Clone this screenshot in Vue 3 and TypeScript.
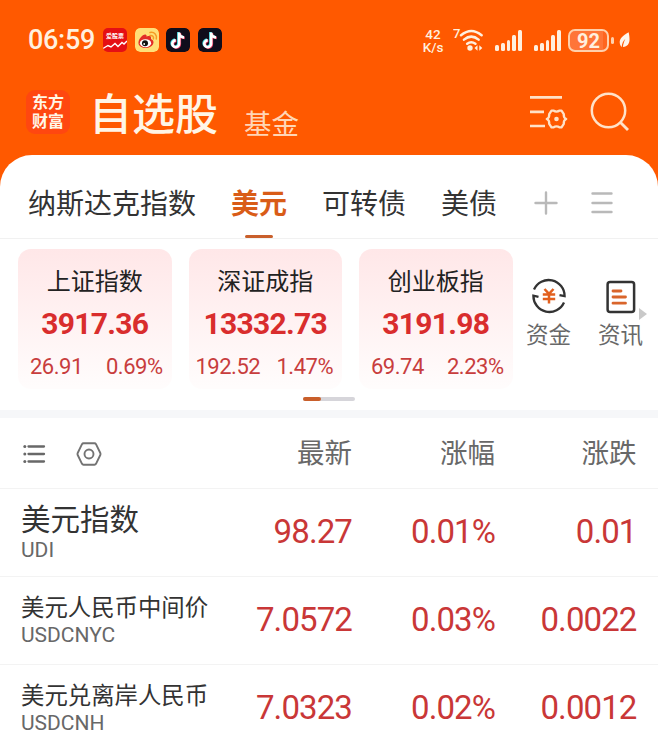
<script setup lang="ts">
interface IndexCard { name: string; value: string; change: string; percent: string }
interface Quote { name: string; code: string; last: string; percent: string; change: string; large?: boolean }

const tabs: string[] = ['纳斯达克指数', '美元', '可转债', '美债']
const activeTab = '美元'
const cards: IndexCard[] = [
  { name: '上证指数', value: '3917.36', change: '26.91', percent: '0.69%' },
  { name: '深证成指', value: '13332.73', change: '192.52', percent: '1.47%' },
  { name: '创业板指', value: '3191.98', change: '69.74', percent: '2.23%' },
]
const quotes: Quote[] = [
  { name: '美元指数', code: 'UDI', last: '98.27', percent: '0.01%', change: '0.01', large: true },
  { name: '美元人民币中间价', code: 'USDCNYC', last: '7.0572', percent: '0.03%', change: '0.0022' },
  { name: '美元兑离岸人民币', code: 'USDCNH', last: '7.0323', percent: '0.02%', change: '0.0012' },
]
const signalBars = [6, 8, 11, 16, 21]
</script>

<template>
  <main class="screen">
    <div class="status">
      <span class="time">06:59</span>
      <div class="apps">
        <span class="app stock">
          <b>爱股票</b>
          <svg viewBox="0 0 24 11"><path d="M0 9.5 5 6.5l3 1.5 4-3.5 3 3 4-4 2 1.500 3-3" fill="none" stroke="#fff" stroke-width="1.4" /></svg>
        </span>
        <svg class="app" viewBox="0 0 24 24">
          <rect width="24" height="24" rx="5" fill="#ffdf78" />
          <path d="M3.500 15.500C3 11 8 6 10.500 6.500c1.500.3 1 2 1 2s4.500-1.800 4.500 1c0 1.200-.3 1.500.8 2C21 14 17 20 11 20c-4 0-7.200-2-7.500-4.500z" fill="#e22d27" />
          <ellipse cx="10.500" cy="15.200" rx="5.600" ry="4" fill="#fff" />
          <circle cx="10" cy="15.300" r="3" fill="#111" /><circle cx="9.200" cy="16" r=".9" fill="#fff" />
          <path d="M15 7.500c2.500-.5 4 1.200 3.400 3.400M15 4.500c4.500-.8 7.300 2.400 6.300 6.400" fill="none" stroke="#f59b24" stroke-width="1.500" stroke-linecap="round" />
        </svg>
        <svg v-for="n in 2" :key="n" class="app" viewBox="0 0 24 24">
          <rect width="24" height="24" rx="5" fill="#100d1b" />
          <g fill="none" stroke-width="2.600">
            <path d="M12.400 4v11.300a3.400 3.400 0 1 1-3.400-3.400M12.400 4.500c.4 2.700 2.200 4.300 5 4.500" stroke="#35dbe4" />
            <path d="M13.800 5v11.300a3.400 3.400 0 1 1-3.400-3.400M13.800 5.500c.4 2.700 2.200 4.300 5 4.500" stroke="#f2416b" />
            <path d="M13.100 4.500v11.300a3.400 3.400 0 1 1-3.400-3.400M13.100 5c.4 2.700 2.200 4.300 5 4.500" stroke="#fff" />
          </g>
        </svg>
      </div>
      <div class="speed"><span>42</span><span>K/s</span></div>
      <svg class="wifi" viewBox="0 0 31 26">
        <text x="0" y="11" font-size="13" font-weight="500" fill="#fff0df">7</text>
        <g fill="none" stroke="#fff0df" stroke-width="2.500" stroke-linecap="round">
          <path d="M8 8.200q10.300-8.400 20.600 0M11 12.600q7.300-6 14.600 0M14.200 16.700q4-3 8.200 0" />
        </g>
        <circle cx="17" cy="21" r="2.700" fill="#fff0df" />
        <path d="M21.500 21l3-2.800v5.600zM29.300 21l-3-2.800v5.600z" fill="#fff0df" />
      </svg>
      <div v-for="s in 2" :key="s" class="signal">
        <i v-for="h in signalBars" :key="h" :style="{ height: h + 'px' }"></i>
      </div>
      <div class="battery">92</div>
      <i class="nub"></i>
      <svg class="leaf" viewBox="0 0 12 18"><path d="M10.500.5C4 4 .5 7.500.8 12c.1 2 1.100 3.700 2.200 4.700 0-3.500 1.600-6.400 4-9-1.500 3-2.500 6-2.700 9 5-.2 7.200-4 7.200-8.200 0-3-.4-5.500-1-8z" fill="#fff6ea" /></svg>
    </div>

    <header class="header">
      <div class="logo"><span>东方</span><span>财富</span></div>
      <h1>自选股</h1>
      <span class="fund">基金</span>
      <svg class="filter" viewBox="0 0 40 36" fill="none" stroke="#ffe2c8" stroke-width="2.700">
        <path d="M1 3.400h32M1 17.800h14M1 32h15" />
        <path d="M22.500 16.600h1.800q3.200 2 6.400 0h1.800l2.300 3.600q-.4 3.600 2.400 4.800-2.800 1.200-2.400 4.800l-2.300 3.600h-1.800q-3.200-2-6.400 0h-1.800l-2.300-3.600q.4-3.600-2.400-4.800 2.800-1.200 2.400-4.800z" stroke-width="2.300" stroke-linejoin="round" />
        <circle cx="27.500" cy="25" r="2.300" fill="#ffe2c8" stroke="none" />
      </svg>
      <svg class="search" viewBox="0 0 40 40" fill="none" stroke="#ffe2c8" stroke-width="2.500">
        <circle cx="18.500" cy="18.500" r="16.700" /><path d="m30.500 30.500 7.500 7.500" stroke-width="2.900" />
      </svg>
    </header>

    <section class="panel">
      <nav class="tabs">
        <span v-for="tab in tabs" :key="tab" :class="{ active: tab === activeTab }">{{ tab }}</span>
        <svg class="plus" viewBox="0 0 24 24"><path d="M12 1.500v21M1.500 12h21" /></svg>
        <svg class="menu" viewBox="0 0 24 24"><path d="M2.500 2.500h19M2.500 12h19M2.500 21h19" /></svg>
      </nav>

      <div class="indices">
        <article v-for="card in cards" :key="card.name" class="card">
          <h2>{{ card.name }}</h2>
          <strong>{{ card.value }}</strong>
          <div class="delta"><span>{{ card.change }}</span><span>{{ card.percent }}</span></div>
        </article>
        <div class="shortcut money">
          <svg viewBox="0 0 36 36" fill="none">
            <path d="M3 11.500A16 16 0 0 1 33.600 18.200L28.500 17.200M33 24.500A16 16 0 0 1 2.400 17.600L7.500 18.800" stroke="#333" stroke-width="2.300" />
            <path d="m13.500 11 4.500 4.800 4.500-4.800M11.800 16.500h12.400M11.800 21h12.400M18 16v9.500" stroke="#e2601e" stroke-width="2.500" />
          </svg>
          <span>资金</span>
        </div>
        <div class="shortcut news">
          <svg viewBox="0 0 36 36" fill="none">
            <rect x="4.600" y="4" width="26.500" height="30" rx="2.500" stroke="#333" stroke-width="2.500" />
            <path d="M10 13h8M10 19h12.500M10 25.200h12.500" stroke="#d9652b" stroke-width="2.800" stroke-linecap="round" />
          </svg>
          <span>资讯</span>
        </div>
        <i class="arrow"></i>
      </div>
      <div class="pager"><i></i></div>
      <div class="divider"></div>

      <div class="grid head">
        <div class="tools">
          <svg class="list" viewBox="0 0 24 22"><path d="M6.500 3.500h15.500M6.500 11h15.500M6.500 18.500h15.500" stroke="#686868" stroke-width="2.300" stroke-linecap="round" /><g fill="#686868"><circle cx="2.800" cy="3.500" r="1.500" /><circle cx="2.800" cy="11" r="1.500" /><circle cx="2.800" cy="18.500" r="1.500" /></g></svg>
          <svg class="hex" viewBox="0 0 26 24" fill="none" stroke="#737373" stroke-width="1.900"><path d="M7.500 1.300h11q1 0 1.500.9l4.300 8.800q.5 1 0 2L20 21.800q-.5.9-1.500.9h-11q-1 0-1.500-.9L1.700 13q-.5-1 0-2L6 2.200q.5-.9 1.500-.9z" /><circle cx="13" cy="12" r="4.500" /></svg>
        </div>
        <span>最新</span><span>涨幅</span><span>涨跌</span>
      </div>
      <div v-for="q in quotes" :key="q.code" class="grid row">
        <div class="name" :class="{ large: q.large }"><b>{{ q.name }}</b><small>{{ q.code }}</small></div>
        <span>{{ q.last }}</span><span>{{ q.percent }}</span><span>{{ q.change }}</span>
      </div>
    </section>
  </main>
</template>

<style>
body { overflow: hidden; }
</style>

<style scoped>
* { box-sizing: border-box; }
svg { display: block; flex: none; }
.screen { width: 658px; height: 750px; overflow: hidden; background: #ff5900; color: #333; font-family: Roboto, "Noto Sans CJK SC", sans-serif; white-space: nowrap; }
.status { height: 80px; padding-left: 28px; display: flex; align-items: center; color: #fff0df; }
.time { width: 75px; font-size: 27px; font-weight: 500; letter-spacing: -.3px; line-height: 30px; }
.apps { display: flex; gap: 7.500px; width: 319px; }
.app { width: 24px; height: 24px; border-radius: 5px; }
.stock { background: #e50f14; color: #fff; overflow: hidden; display: flex; flex-direction: column; align-items: center; padding-top: 4px; }
.stock b { font-size: 6px; line-height: 7px; }
.stock svg { width: 24px; height: 11px; }
.speed { width: 22px; display: flex; flex-direction: column; align-items: center; gap: 1px; font-size: 13.500px; line-height: 12px; font-weight: 500; }
.speed span { height: 12px; }
.wifi { width: 31px; height: 26px; margin-left: 9px; }
.signal { display: flex; align-items: flex-end; justify-content: space-between; width: 27px; height: 22px; margin-left: 11px; }
.signal + .signal { margin-left: 12px; }
.signal i { width: 3.800px; background: #fff0df; border-radius: 1.500px; }
.battery { width: 41px; height: 23px; margin-left: 7px; border: 2px solid #ffd0ac; border-radius: 7px; background: linear-gradient(90deg, #ff7538 88%, #ff6520 88%); text-align: center; font-size: 20px; line-height: 20px; font-weight: 700; }
.nub { width: 2.500px; height: 7px; border-radius: 2px; background: #ffd0ac; margin: 0 5px 0 2px; }
.leaf { width: 11px; height: 18px; }
.header { height: 75px; display: flex; align-items: flex-start; padding-left: 26px; }
.logo { width: 44px; height: 44px; margin-top: 10px; border-radius: 9px; background: #ff4710; color: #fff7e8; display: flex; flex-direction: column; align-items: center; gap: 2px; padding-top: 4px; font: 700 16px/17px Roboto, "Noto Sans CJK SC", sans-serif; }
h1 { margin: 9px 0 0 19px; width: 155px; font-size: 43px; line-height: 52px; font-weight: 500; color: #fff5e7; }
.fund { width: 285px; margin-top: 27px; font-size: 27.500px; line-height: 36px; color: #ffd6b6; }
.filter { width: 40px; height: 36px; margin-top: 14px; }
.search { width: 40px; height: 40px; margin: 12px 0 0 21px; }
.panel { height: 595px; background: #fff; border-radius: 32px 32px 0 0; }
.tabs { height: 84px; padding: 1px 0 0 28px; display: flex; align-items: flex-start; border-bottom: 1px solid #f1f1f1; }
.tabs span { height: 82px; font-size: 28px; line-height: 97px; margin-right: 35px; display: flex; flex-direction: column; align-items: center; }
.tabs .active { font-weight: 700; color: #d95c17; }
.tabs .active::after { content: ""; width: 28px; height: 4px; margin-top: -18px; border-radius: 2px; background: #c95f2b; }
.tabs svg { width: 24px; height: 24px; margin-top: 35px; stroke: #b9b9b9; stroke-width: 2.400; stroke-linecap: round; }
.tabs .plus { margin-left: 2px; }
.tabs .menu { margin-left: 32px; }
.indices { height: 150px; padding: 10px 0 0 18px; display: flex; }
.card { flex: none; width: 153.500px; height: 140px; margin-right: 17px; border-radius: 13px; background: linear-gradient(#ffe7e8, #fffcfc 98%); color: #d92d2d; text-align: center; }
h2 { margin: 17px 0 0; font-size: 24px; line-height: 33px; font-weight: 400; color: #222; }
.card strong { display: block; margin-top: 7px; font-size: 30px; line-height: 36px; font-weight: 700; letter-spacing: -.7px; }
.delta { display: flex; justify-content: space-between; padding: 0 9px 0 12px; margin-top: 12px; font-size: 22px; line-height: 26px; letter-spacing: -.5px; color: #c83d3d; }
.card:nth-child(2) .delta { padding-left: 7px; }
.shortcut { width: 46px; padding-top: 29px; display: flex; flex-direction: column; align-items: center; font-size: 22.500px; line-height: 34px; color: #686868; }
.money { margin-left: -4px; }
.news { margin-left: 26px; }
.shortcut svg { width: 36px; height: 36px; margin-bottom: 4px; }
.arrow { margin: 59px 0 0 -5px; width: 0; height: 0; border: 6px solid transparent; border-left: 8px solid #c9c9c9; border-right: 0; }
.pager { width: 52px; height: 4px; margin: 8px 0 9px 303px; border-radius: 2px; background: #d6d5da; }
.pager i { display: block; width: 18px; height: 4px; border-radius: 2px; background: #c95f2b; }
.divider { height: 8px; background: #f6f7f9; }
.grid { display: grid; grid-template-columns: 221px 110px 143px 141.500px; padding-left: 21px; border-bottom: 1px solid #f3f3f3; text-align: right; }
.head { height: 71px; font-size: 27.500px; line-height: 71px; color: #686868; }
.tools { display: flex; align-items: center; gap: 30px; padding-left: 1px; }
.list { width: 24px; height: 22px; }
.hex { width: 26px; height: 24px; }
.row { height: 88px; font-size: 33px; line-height: 86px; color: #c93737; letter-spacing: -.9px; }
.name { text-align: left; display: flex; flex-direction: column; letter-spacing: 0; color: #333; padding-top: 14px; }
.name b { font-size: 23.400px; line-height: 34px; font-weight: 400; }
.name small { font-size: 21px; line-height: 20px; color: #686868; }
.name.large b { font-size: 29.500px; line-height: 35px; }
.name.large small { line-height: 24px; }
</style>
